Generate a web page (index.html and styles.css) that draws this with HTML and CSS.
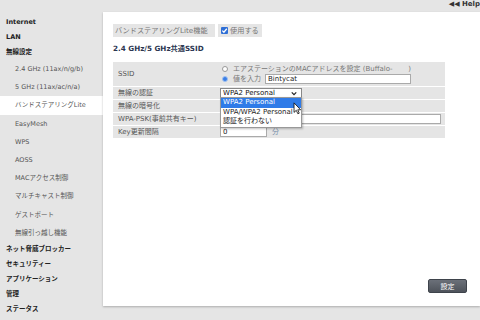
FILE: index.html
```html
<!DOCTYPE html>
<html lang="ja">
<head>
<meta charset="utf-8">
<title>バンドステアリングLite</title>
<link rel="stylesheet" href="styles.css">
</head>
<body>
<div class="top"><span class="help">◀◀ Help</span></div>
<div class="layout">
  <nav class="sidebar">
    <div class="nav-top">Internet</div>
    <div class="nav-top">LAN</div>
    <div class="nav-top">無線設定</div>
    <div class="nav-sub">2.4 GHz (11ax/n/g/b)</div>
    <div class="nav-sub">5 GHz (11ax/ac/n/a)</div>
    <div class="nav-sub active">バンドステアリングLite</div>
    <div class="nav-sub">EasyMesh</div>
    <div class="nav-sub">WPS</div>
    <div class="nav-sub">AOSS</div>
    <div class="nav-sub">MACアクセス制御</div>
    <div class="nav-sub">マルチキャスト制御</div>
    <div class="nav-sub">ゲストポート</div>
    <div class="nav-sub">無線引っ越し機能</div>
    <div class="nav-top">ネット脅威ブロッカー</div>
    <div class="nav-top">セキュリティー</div>
    <div class="nav-top">アプリケーション</div>
    <div class="nav-top">管理</div>
    <div class="nav-top">ステータス</div>
  </nav>
  <main class="panel">
    <div class="feature">
      <span class="feature-label">バンドステアリングLite機能</span>
      <span class="feature-check"><span class="cb"><svg viewBox="0 0 8 8" width="7" height="7"><path d="M1.5 4.2 L3.3 6 L6.6 2" fill="none" stroke="#fff" stroke-width="1.4"/></svg></span>使用する</span>
    </div>
    <h2 class="section">2.4 GHz/5 GHz共通SSID</h2>
    <div class="table">
      <div class="row ssid">
        <div class="lab">SSID</div>
        <div class="val">
          <div class="line"><span class="radio"></span>エアステーションのMACアドレスを設定 (Buffalo-&nbsp;&nbsp;&nbsp;&nbsp;&nbsp;&nbsp;&nbsp;)</div>
          <div class="line"><span class="radio on"></span>値を入力 <span class="input wide">Bintycat</span></div>
        </div>
      </div>
      <div class="row">
        <div class="lab">無線の認証</div>
        <div class="val">
          <div class="select">WPA2 Personal<svg class="chev" viewBox="0 0 8 6" width="6" height="5"><path d="M1 1.5 L4 4.5 L7 1.5" fill="none" stroke="#222" stroke-width="1.6"/></svg></div>
          <div class="dropdown">
            <div class="opt sel">WPA2 Personal</div>
            <div class="opt">WPA/WPA2 Personal</div>
            <div class="opt">認証を行わない</div>
          </div>
          <svg class="cursor" viewBox="0 0 10 15" width="9" height="13"><path d="M1 1 L1 12 L3.6 9.6 L5.4 13.6 L7 12.9 L5.3 9 L8.6 9 Z" fill="#fff" stroke="#000" stroke-width="0.9" stroke-linejoin="round"/></svg>
        </div>
      </div>
      <div class="row">
        <div class="lab">無線の暗号化</div>
        <div class="val"></div>
      </div>
      <div class="row">
        <div class="lab">WPA-PSK(事前共有キー)</div>
        <div class="val"><span class="input psk"></span></div>
      </div>
      <div class="row">
        <div class="lab">Key更新間隔</div>
        <div class="val"><span class="input short">0</span><span class="unit">分</span></div>
      </div>
    </div>
    <div class="actions"><button class="btn">設定</button></div>
  </main>
</div>
</body>
</html>
```
FILE: styles.css
```css
* { box-sizing: border-box; }
html, body { margin: 0; padding: 0; }
body {
  width: 480px;
  height: 320px;
  overflow: hidden;
  background: #e5e5e5;
  font-family: "DejaVu Sans", "Noto Sans CJK JP", sans-serif;
  color: #444;
}
.top {
  height: 12px;
  display: flex;
  justify-content: flex-end;
  align-items: center;
}
.help {
  font-size: 7px;
  font-weight: bold;
  color: #333;
  line-height: 8px;
  margin-top: -5px;
}
.layout {
  display: flex;
  height: 294px;
}
.sidebar {
  width: 103px;
  flex: none;
  padding-top: 3px;
}
.nav-top {
  height: 15px;
  line-height: 15px;
  padding-left: 6px;
  font-size: 6.5px;
  font-weight: bold;
  color: #222;
  white-space: nowrap;
}
.nav-sub {
  height: 18.2px;
  line-height: 18.2px;
  padding-left: 15px;
  font-size: 6.5px;
  color: #555;
  white-space: nowrap;
}
.nav-sub.active {
  background: #fff;
}
.panel {
  flex: 1;
  background: #fff;
  box-shadow: 0 1px 2px rgba(0,0,0,0.25);
  display: flex;
  flex-direction: column;
  padding: 12px 0 0 10px;
}
.feature {
  display: flex;
  gap: 3px;
  height: 13px;
  font-size: 7.2px;
  line-height: 13px;
}
.feature-label {
  background: #e5e5e5;
  color: #777;
  padding: 0 2px 0 2px;
  width: 102px;
  white-space: nowrap;
}
.feature-check {
  background: #e5e5e5;
  color: #777;
  display: flex;
  align-items: center;
  gap: 2px;
  padding: 0 3px 0 3px;
}
.cb {
  width: 7px;
  height: 7px;
  background: #2f6fd6;
  border-radius: 1px;
  display: flex;
}
.section {
  margin: 7px 0 8px 0;
  font-size: 7.2px;
  line-height: 10px;
  font-weight: bold;
  color: #2b3550;
}
.table {
  width: 332px;
  display: flex;
  flex-direction: column;
  gap: 1px;
}
.row {
  display: grid;
  grid-template-columns: 107px 1fr;
  height: 12px;
  background: #e5e5e5;
  font-size: 7px;
  line-height: 12px;
}
.row.ssid {
  height: 24px;
}
.lab {
  padding-left: 5px;
  color: #555;
  white-space: nowrap;
}
.ssid .lab {
  line-height: 24px;
}
.val {
  position: relative;
  display: flex;
  align-items: center;
  white-space: nowrap;
  color: #777;
}
.ssid .val {
  flex-direction: column;
  align-items: flex-start;
  padding-top: 2px;
}
.line {
  height: 10px;
  line-height: 10px;
  display: flex;
  align-items: center;
  padding-left: 2px;
}
.radio {
  width: 6px;
  height: 6px;
  border-radius: 50%;
  border: 1px solid #999;
  background: #fff;
  margin-right: 5px;
  flex: none;
}
.radio.on {
  background: #3a7ee6;
  border-color: #9fc0f0;
}
.input {
  display: inline-block;
  height: 10px;
  line-height: 9px;
  border: 1px solid #aaa;
  background: #fff;
  color: #222;
  padding-left: 2px;
  font-size: 7px;
}
.input.wide {
  width: 146px;
  margin-left: 4px;
}
.input.psk {
  width: 221px;
}
.input.short {
  width: 47px;
}
.unit {
  margin-left: 5px;
  color: #7a90ab;
}
.select {
  width: 82px;
  height: 10px;
  border: 1px solid #888;
  background: #fff;
  color: #111;
  line-height: 8px;
  padding-left: 2px;
  display: flex;
  justify-content: space-between;
  align-items: center;
  font-size: 7px;
}
.chev {
  margin-right: 4px;
}
.dropdown {
  position: absolute;
  left: 0;
  top: 10px;
  width: 82px;
  background: #fff;
  border: 1px solid #999;
  box-shadow: 1px 1px 2px rgba(0,0,0,0.25);
  z-index: 5;
}
.opt {
  height: 9.6px;
  line-height: 9.6px;
  padding-left: 2px;
  font-size: 7px;
  color: #222;
}
.opt.sel {
  background: #2f7be8;
  color: #fff;
}
.cursor {
  position: absolute;
  left: 73px;
  top: 15px;
  z-index: 6;
}
.actions {
  margin-top: auto;
  display: flex;
  justify-content: flex-end;
  padding: 0 13px 13px 0;
}
.btn {
  width: 39px;
  height: 14px;
  border: 1px solid #3e434b;
  border-radius: 2px;
  background: linear-gradient(#6b7079, #4e535b);
  color: #fff;
  font-family: "Noto Sans CJK JP", sans-serif;
  font-size: 7px;
  line-height: 12px;
  padding: 0;
}
```
